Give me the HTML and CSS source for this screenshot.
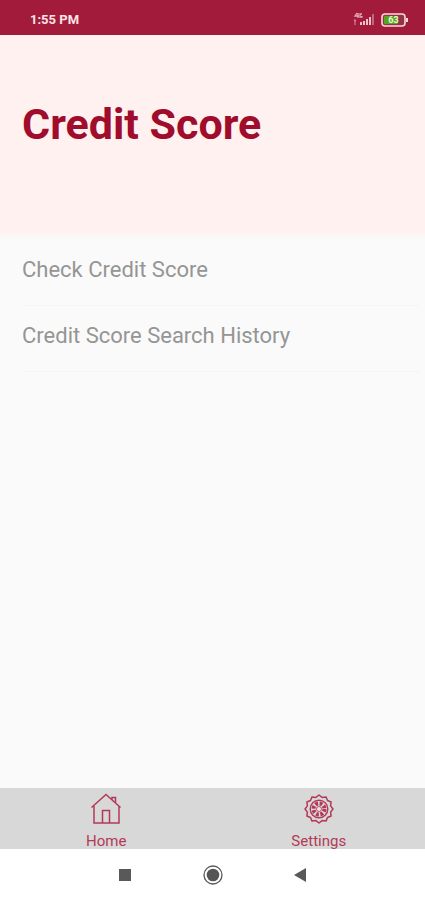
FILE: index.html
```html
<!DOCTYPE html>
<html lang="en">
<head>
<meta charset="utf-8">
<meta name="viewport" content="width=device-width, initial-scale=1">
<title>Credit Score</title>
<link rel="stylesheet" href="styles.css">
</head>
<body>
<div class="status">
  <span class="time">1:55 PM</span>
  <div class="indicators">
    <svg class="signal" width="24" height="16" viewBox="0 0 24 16" aria-hidden="true">
      <path d="M4 1L2 4h4M5 1v5M9 2H7v3h2V4" fill="none" stroke="#e5a9b8" stroke-width="1.300"/>
      <path d="M2 8v5M1 9l1-1 1 1" fill="none" stroke="#cf7a91" stroke-width="1.300"/>
      <path d="M8 13v-3M11 13V9M14 13V7M17 13V5" stroke="#f0bfcb" stroke-width="2"/>
      <path d="M20 13V2" stroke="#c7647e" stroke-width="2"/>
    </svg>
    <div class="battery">
      <svg width="28" height="14" viewBox="0 0 28 14" aria-hidden="true">
        <rect x="1" y="1" width="23" height="12" rx="3" fill="#8f3546" stroke="#f8d7de" stroke-width="1.6"/>
        <rect x="3" y="3" width="14" height="8" rx="1" fill="#5aa51e"/>
        <path d="M26 5v4" stroke="#f8d7de" stroke-width="2"/>
      </svg>
      <span class="level">63</span>
    </div>
  </div>
</div>
<header class="hero">
  <h1>Credit Score</h1>
</header>
<main class="menu">
  <a class="row" href="#check">Check Credit Score</a>
  <a class="row" href="#history">Credit Score Search History</a>
</main>
<nav class="tabs">
  <a class="tab" href="#home">
    <svg width="32" height="32" viewBox="0 0 32 32" fill="none" stroke="#b23a57" stroke-width="1.500" aria-hidden="true">
      <path d="M1.500 14.500L16 1.500l14.500 13M4 13v17h25V13M12.500 30V17.500h7V30M22 6.500V4.500h3.500v5"/>
    </svg>
    <span>Home</span>
  </a>
  <a class="tab" href="#settings">
    <svg width="32" height="32" viewBox="0 0 32 32" fill="none" stroke="#b23a57" aria-hidden="true">
      <path stroke-width="1.500" stroke-linejoin="round" d="M16 2L19.100 4.400L23 3.900L24.500 7.500L28.100 9L27.600 12.900L30 16L27.600 19.100L28.100 23L24.500 24.500L23 28.100L19.100 27.600L16 30L12.900 27.600L9 28.100L7.500 24.500L3.900 23L4.400 19.100L2 16L4.400 12.900L3.900 9L7.500 7.500L9 3.900L12.900 4.400Z"/>
      <circle cx="16" cy="16" r="8.800" stroke-width="1.400"/>
      <circle cx="16" cy="16" r="5.500" stroke-width="4" stroke-dasharray="2.700 1.620"/>
      <circle cx="16" cy="16" r="2.500" fill="#f1e3e6" stroke-width=".8"/>
    </svg>
    <span>Settings</span>
  </a>
</nav>
<div class="system">
  <button type="button" aria-label="Recent apps">
    <svg width="20" height="20" viewBox="0 0 20 20"><path d="M4 4h12v12H4z" fill="#595959"/></svg>
  </button>
  <button type="button" aria-label="Home screen">
    <svg width="20" height="20" viewBox="0 0 20 20"><circle cx="10" cy="10" r="9" fill="none" stroke="#595959" stroke-width="1.300"/><circle cx="10" cy="10" r="6.300" fill="#555"/></svg>
  </button>
  <button type="button" aria-label="Back">
    <svg width="20" height="20" viewBox="0 0 20 20"><path d="M3 10l12-7v14z" fill="#595959"/></svg>
  </button>
</div>
</body>
</html>
```
FILE: styles.css
```css
* {
  box-sizing: border-box;
}

body {
  margin: 0;
  min-height: 100vh;
  display: flex;
  flex-direction: column;
  background: #fafafa;
  font-family: Roboto, "Liberation Sans", sans-serif;
}

.status {
  display: flex;
  justify-content: space-between;
  align-items: center;
  height: 35px;
  padding: 4px 16px 0 30px;
  background: #a31b3a;
}

.time {
  color: #fbe3e8;
  font-size: 13px;
  font-weight: 700;
}

.indicators {
  display: flex;
  align-items: center;
  gap: 4px;
}

.signal,
.battery svg {
  display: block;
}

.battery {
  position: relative;
}

.level {
  position: absolute;
  left: 0;
  top: 0;
  width: 25px;
  color: #eef5dc;
  font-size: 9px;
  font-weight: 700;
  line-height: 14px;
  text-align: center;
}

.hero {
  height: 205px;
  padding: 63px 22px 0;
  background: linear-gradient(#fff1f0 0, #fff1f0 195px, #fafafa 100%);
}

h1 {
  margin: 0;
  color: #a00c2b;
  font-size: 43px;
  font-weight: 700;
  line-height: 52px;
}

.menu {
  flex: 1;
  padding: 0 6px 0 22px;
}

.row {
  display: flex;
  align-items: center;
  height: 66px;
  padding-bottom: 6px;
  border-bottom: 1px solid #f5f5f5;
  color: #959595;
  font-size: 22px;
  text-decoration: none;
}

.tabs {
  display: flex;
  background: #d8d8d8;
}

.tab {
  flex: 1;
  display: flex;
  flex-direction: column;
  align-items: center;
  gap: 8px;
  padding-top: 5px;
  color: #b23a57;
  font-size: 15px;
  line-height: 16px;
  text-decoration: none;
}

.tab svg {
  flex: none;
}

.system {
  display: flex;
  justify-content: center;
  align-items: center;
  gap: 68px;
  height: 51px;
  background: #fff;
}

.system button {
  display: flex;
  padding: 0;
  border: 0;
  background: none;
}
```
